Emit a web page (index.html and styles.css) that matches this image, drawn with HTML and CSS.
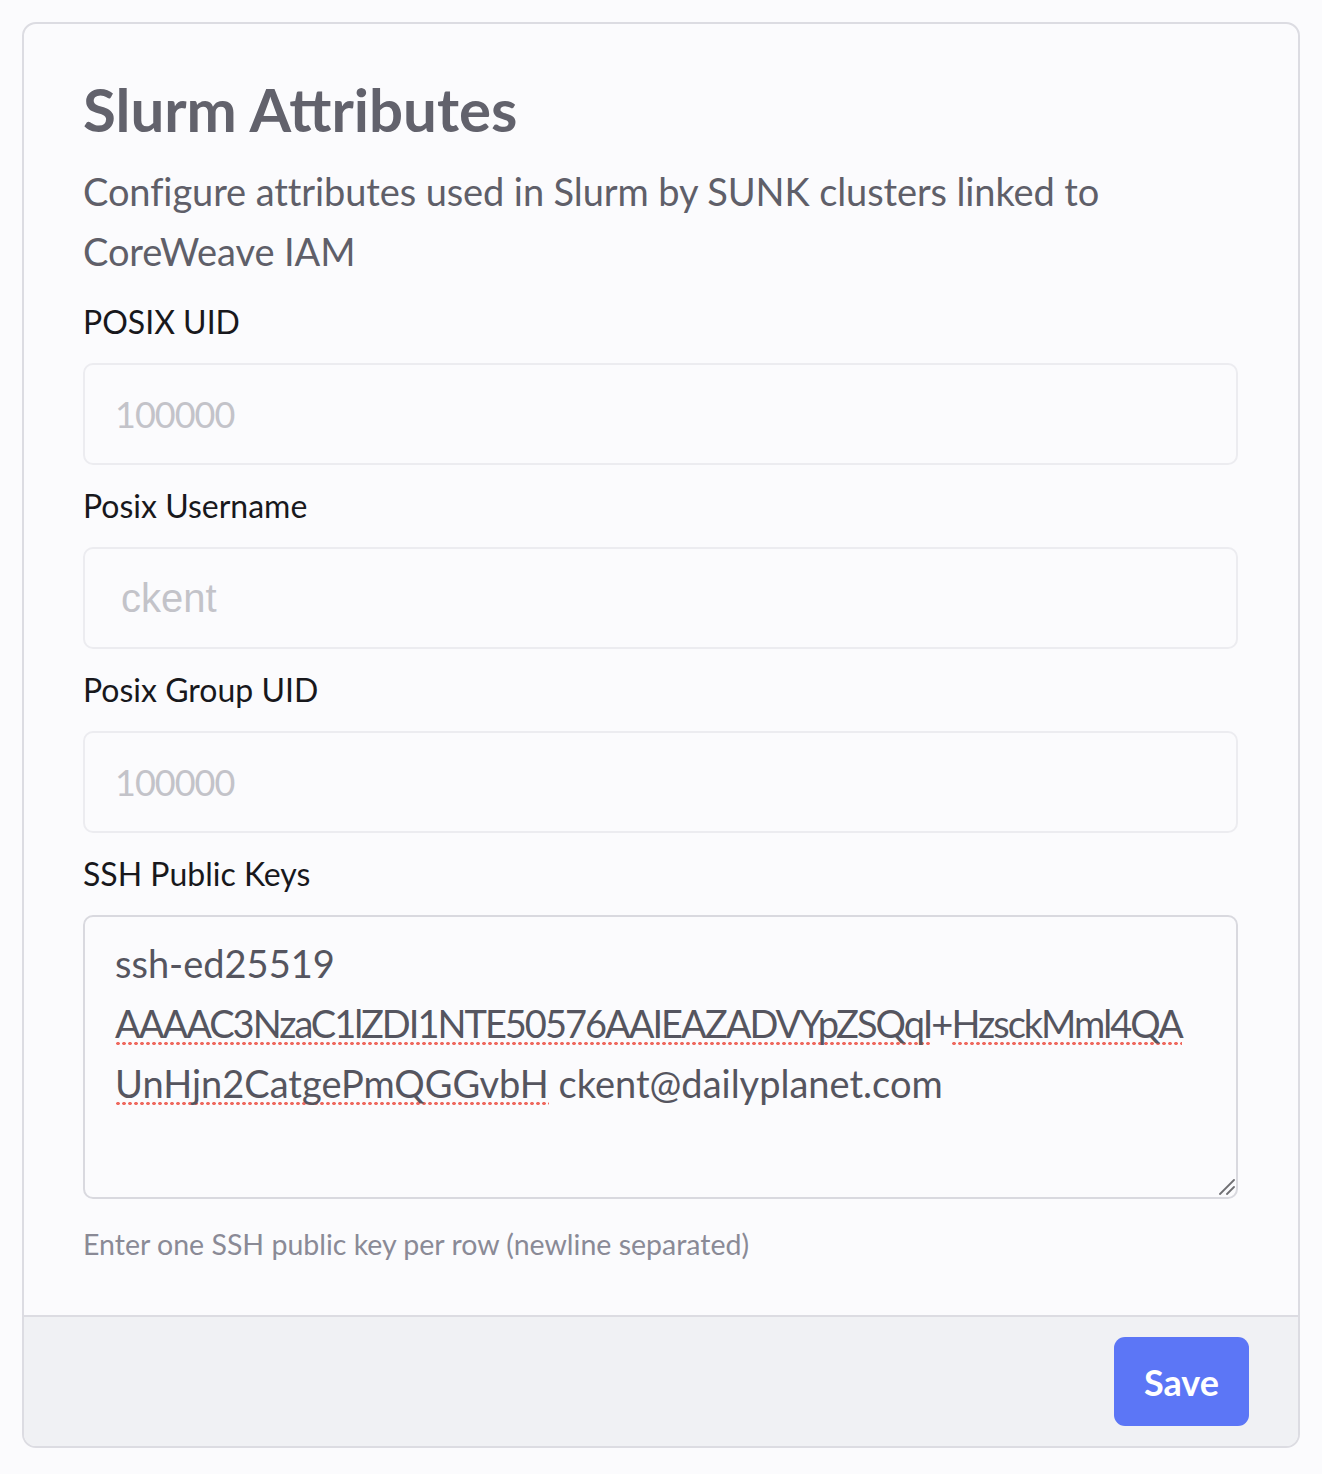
FILE: index.html
```html
<!DOCTYPE html>
<html lang="en">
<head>
<meta charset="utf-8">
<title>Slurm Attributes</title>
<link rel="stylesheet" href="styles.css">
</head>
<body>
<form class="card">
  <div class="card-body">
    <h1 class="title">Slurm Attributes</h1>
    <p class="desc">Configure attributes used in Slurm by SUNK clusters linked to CoreWeave IAM</p>

    <div class="field">
      <label class="label" for="uid">POSIX UID</label>
      <input class="input" id="uid" type="text" placeholder="100000">
    </div>

    <div class="field">
      <label class="label" for="uname">Posix Username</label>
      <input class="input input-alt" id="uname" type="text" placeholder="ckent">
    </div>

    <div class="field">
      <label class="label" for="gid">Posix Group UID</label>
      <input class="input" id="gid" type="text" placeholder="100000">
    </div>

    <div class="field">
      <label class="label" id="keys-label">SSH Public Keys</label>
      <div class="textarea-wrap">
        <div class="textarea" role="textbox" aria-multiline="true" aria-labelledby="keys-label" contenteditable="true" spellcheck="true">ssh-ed25519<br><span class="key-line"><span class="misspelled">AAAAC3NzaC1lZDI1NTE50576AAIEAZADVYpZSQqI</span>+<span class="misspelled">HzsckMml4QA</span></span><br><span class="misspelled">UnHjn2CatgePmQGGvbH</span> ckent@dailyplanet.com</div>
        <svg class="grip" width="16" height="16" viewBox="0 0 16 16" aria-hidden="true">
          <line x1="1" y1="15" x2="15" y2="1" />
          <line x1="8" y1="15" x2="15" y2="8" />
        </svg>
      </div>
      <p class="help">Enter one SSH public key per row (newline separated)</p>
    </div>
  </div>
  <div class="card-footer">
    <button class="btn" type="submit">Save</button>
  </div>
</form>
</body>
</html>
```

FILE: styles.css
```css
* {
  box-sizing: border-box;
}

html, body {
  background: #fbfbfd;
}

body {
  margin: 0;
  padding: 22px 22px 25px;
  font-family: "Lato", "Noto Sans", sans-serif;
}

.card {
  display: flex;
  flex-direction: column;
  border: 2px solid #dcdce2;
  border-radius: 14px;
  overflow: hidden;
  background: #fbfbfd;
}

.card-body {
  padding: 48px 60px 50px 59px;
  display: flex;
  flex-direction: column;
}

.title {
  margin: 0;
  font-size: 60px;
  line-height: 75px;
  font-weight: 700;
  color: #62626c;
}

.desc {
  margin: 14px 0 0;
  font-size: 38px;
  line-height: 60px;
  letter-spacing: -0.1px;
  color: #5f5f69;
}

.field {
  display: flex;
  flex-direction: column;
  margin-top: 17px;
}

.label {
  font-size: 32px;
  line-height: 48px;
  color: #18181c;
  margin-bottom: 17px;
}

.input {
  display: block;
  width: 100%;
  height: 102px;
  border: 2px solid #ececf0;
  border-radius: 10px;
  background: #fbfbfd;
  padding: 0 30px;
  font-family: "Lato", "Noto Sans", sans-serif;
  font-size: 36px;
  letter-spacing: -1px;
  color: #55555f;
  outline: none;
}

.input::placeholder {
  color: #c3c3c9;
}

.input-alt {
  padding-left: 36px;
  font-family: "Liberation Sans", Arial, sans-serif;
  font-size: 40px;
  letter-spacing: 0;
}

.textarea-wrap {
  position: relative;
}

.textarea {
  height: 284px;
  border: 2px solid #d9d9df;
  border-radius: 10px;
  background: #fbfbfd;
  padding: 16px 30px;
  font-size: 38px;
  line-height: 60px;
  color: #55555f;
  overflow: auto;
  resize: vertical;
  outline: none;
  white-space: nowrap;
}

.textarea::-webkit-resizer {
  background: transparent;
}

.grip {
  position: absolute;
  right: 3px;
  bottom: 4px;
  pointer-events: none;
  stroke: #6f6f73;
  stroke-width: 1.8;
  stroke-linecap: round;
}

.key-line {
  letter-spacing: -2px;
}

.misspelled {
  background-image: radial-gradient(circle, #ef6a60 1.5px, rgba(239, 106, 96, 0) 2px);
  background-repeat: repeat-x;
  background-size: 6px 5px;
  background-position: 0 100%;
}

.help {
  margin: 24px 0 0;
  font-size: 28.5px;
  line-height: 42px;
  color: #8a8a96;
}

.card-footer {
  display: flex;
  justify-content: flex-end;
  padding: 20px 49px 20px;
  background: #f0f1f4;
  border-top: 2px solid #dcdce2;
}

.btn {
  height: 89px;
  padding: 0 30px;
  border: none;
  border-radius: 11px;
  background: #5c76f6;
  color: #ffffff;
  font-family: "Lato", "Noto Sans", sans-serif;
  font-size: 36px;
  font-weight: 700;
  cursor: pointer;
}
```
